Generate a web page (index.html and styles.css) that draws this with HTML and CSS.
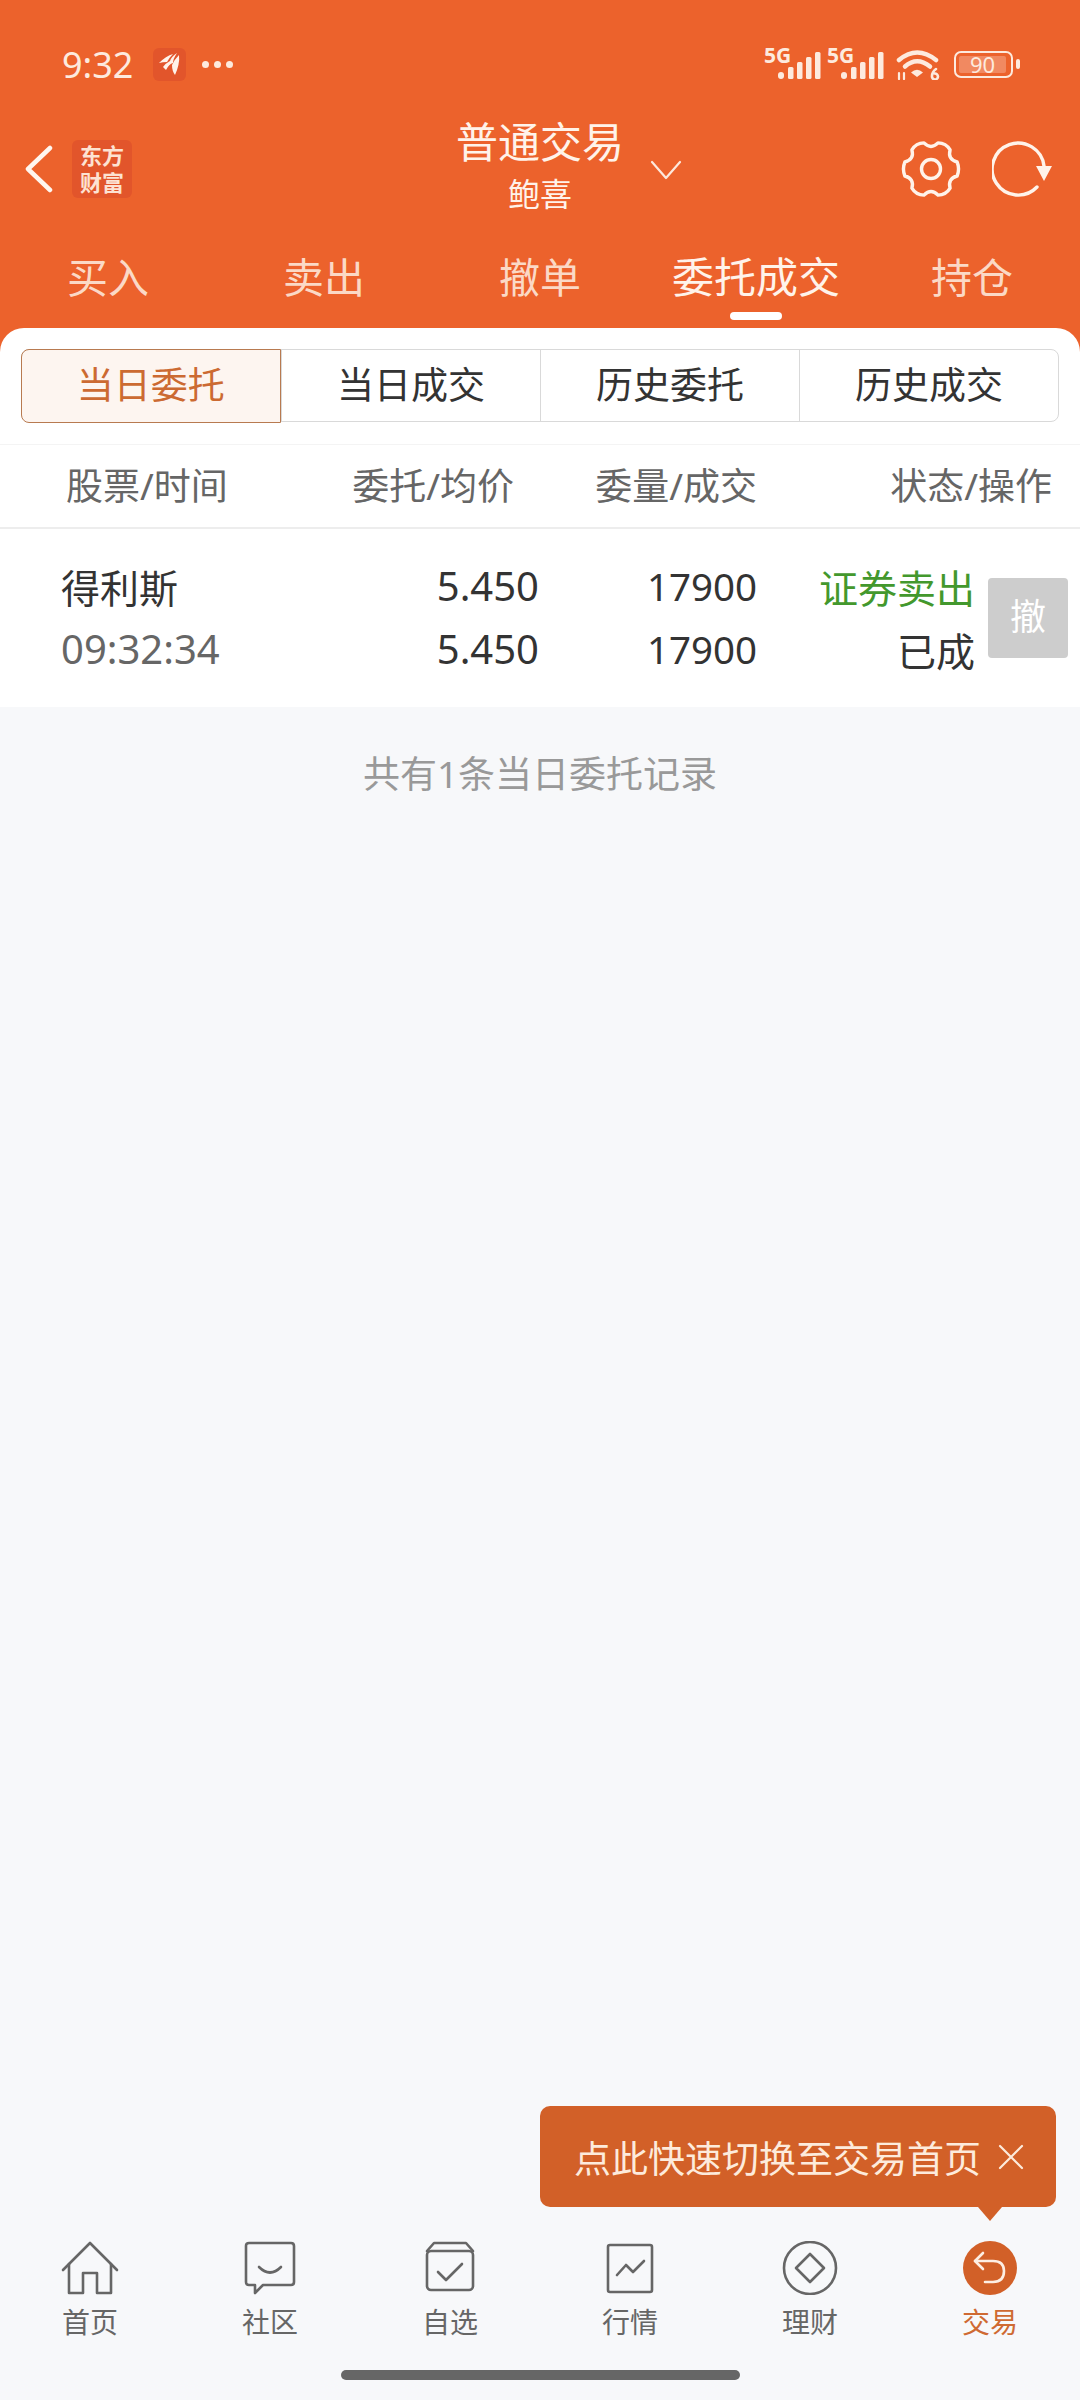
FILE: index.html
```html
<!DOCTYPE html>
<html lang="zh">
<head>
    <meta charset="UTF-8">
    <meta name="viewport" content="width=device-width, initial-scale=1.0">
    <title>普通交易</title>
    <link rel="stylesheet" href="styles.css">
</head>
<body>
    <div class="page">
        <header class="top">
            <div class="status-bar">
                <div class="status-left">
                    <span class="clock">9:32</span>
                    <span class="app-badge">
                        <svg width="24" height="24" viewBox="0 0 24 24" fill="#fff3ea"><path d="M1 11 Q8 4 15 2 Q11 6 9 10 Q5 10 1 11Z"/><path d="M5 15 Q8 11 12 9 Q13 5 19 1 Q15 7 15 11 Q11 12 8 18Z"/><path d="M14 13 Q16 8 21 3 Q22 12 17 23 Q14 19 14 13Z"/></svg>
                    </span>
                    <span class="dots"><i></i><i></i><i></i></span>
                </div>
                <div class="status-right">
                    <span class="signal">
                        <span class="net">5G</span>
                        <svg width="43" height="27" viewBox="0 0 43 27" fill="#fdeade"><rect x="0" y="20" width="6" height="7" rx="3"/><rect x="10" y="15" width="5.500" height="12" rx="1.500"/><rect x="19" y="10" width="5.500" height="17" rx="1.500"/><rect x="28" y="5" width="5.500" height="22" rx="1.500"/><rect x="37" y="0" width="5.500" height="27" rx="1.500"/></svg>
                    </span>
                    <span class="signal">
                        <span class="net">5G</span>
                        <svg width="43" height="27" viewBox="0 0 43 27" fill="#fdeade"><rect x="0" y="20" width="6" height="7" rx="3"/><rect x="10" y="15" width="5.500" height="12" rx="1.500"/><rect x="19" y="10" width="5.500" height="17" rx="1.500"/><rect x="28" y="5" width="5.500" height="22" rx="1.500"/><rect x="37" y="0" width="5.500" height="27" rx="1.500"/></svg>
                    </span>
                    <svg class="wifi" width="44" height="32" viewBox="0 0 44 32" fill="none" stroke="#fdeade" stroke-width="4.500" stroke-linecap="round"><path d="M3 12 Q21 -3 40 12"/><path d="M9 18.500 Q21 8 34 18.500"/><path d="M21 29 L15 24.500 Q21 19 27 24.500Z" fill="#fdeade" stroke="none"/><path d="M3 25 V31 M8 25 V31" stroke-width="2.200"/><path d="M40 21 Q36 24 36 28 A3 3 0 1 0 38.500 25.500" stroke-width="2.600"/></svg>
                    <span class="battery"><span class="battery-fill">90</span></span>
                    <span class="battery-nub"></span>
                </div>
            </div>
            <div class="title-bar">
                <div class="title-left">
                    <svg width="30" height="48" viewBox="0 0 30 48" fill="none" stroke="#fff6ef" stroke-width="4.500" stroke-linecap="round" stroke-linejoin="round"><path d="M26 3 L4 24 L26 45"/></svg>
                    <div class="brand">
                        <div>东方</div>
                        <div>财富</div>
                    </div>
                </div>
                <div class="title-center">
                    <div class="title-main">普通交易</div>
                    <div class="title-sub">鲍喜</div>
                </div>
                <div class="title-right">
                    <svg class="title-arrow" width="32" height="20" viewBox="0 0 32 20" fill="none" stroke="#fde8dc" stroke-width="2.200" stroke-linecap="round" stroke-linejoin="round"><path d="M2 2 L16 18 L30 2"/></svg>
                    <div class="title-actions">
                        <svg width="62" height="62" viewBox="-31 -31 62 62" fill="none" stroke="#fff3ea" stroke-width="3.400" stroke-linejoin="round"><path d="M26.100 -7 Q29 0 26.100 7 Q16.500 9.500 19.100 19.100 Q15 26 7 26.100 Q0 19 -7 26.100 Q-15 26 -19.100 19.100 Q-16.500 9.500 -26.100 7 Q-29 0 -26.100 -7 Q-16.500 -9.500 -19.100 -19.100 Q-15 -26 -7 -26.100 Q0 -19 7 -26.100 Q15 -26 19.100 -19.100 Q16.500 -9.500 26.100 -7Z"/><circle cx="0" cy="0" r="9.500"/></svg>
                        <svg width="64" height="58" viewBox="0 0 64 58" fill="none" stroke="#fff3ea" stroke-width="3.400" stroke-linecap="round"><path d="M45 47 A26 26 0 1 1 52 26"/><path d="M44 26 H60 L52 41Z" fill="#fff3ea" stroke="none"/></svg>
                    </div>
                </div>
            </div>
            <nav class="main-tabs">
                <div class="main-tab">买入</div>
                <div class="main-tab">卖出</div>
                <div class="main-tab">撤单</div>
                <div class="main-tab active">委托成交</div>
                <div class="main-tab">持仓</div>
            </nav>
        </header>

        <main class="content">
            <section class="sheet">
                <div class="segments">
                    <div class="segment active">当日委托</div>
                    <div class="segment">当日成交</div>
                    <div class="segment">历史委托</div>
                    <div class="segment">历史成交</div>
                </div>
                <div class="table-head">
                    <div>股票/时间</div>
                    <div class="num">委托/均价</div>
                    <div class="num">委量/成交</div>
                    <div class="num">状态/操作</div>
                </div>
                <div class="order-row">
                    <div class="stock-name">得利斯</div>
                    <div class="num digits">5.450</div>
                    <div class="num qty">17900</div>
                    <div class="num sell">证券卖出</div>
                    <div class="cancel-btn">撤</div>
                    <div class="order-time digits">09:32:34</div>
                    <div class="num digits">5.450</div>
                    <div class="num qty">17900</div>
                    <div class="num">已成</div>
                </div>
            </section>
            <p class="record-count">共有1条当日委托记录</p>
        </main>

        <div class="tip">
            <span>点此快速切换至交易首页</span>
            <svg width="26" height="26" viewBox="0 0 26 26" fill="none" stroke="#fdebdc" stroke-width="2.200" stroke-linecap="round"><path d="M2 2 L24 24 M24 2 L2 24"/></svg>
        </div>

        <footer class="bottom">
            <nav class="bottom-nav">
                <div class="nav-item">
                    <svg width="58" height="54" viewBox="0 0 58 54" fill="none" stroke="#666" stroke-width="2.600" stroke-linejoin="round" stroke-linecap="round"><path d="M2 29 L29 2 L56 29"/><path d="M8 23 V52 H22 V32 H36 V52 H50 V23"/></svg>
                    <span>首页</span>
                </div>
                <div class="nav-item">
                    <svg width="52" height="54" viewBox="0 0 52 54" fill="none" stroke="#666" stroke-width="2.600" stroke-linejoin="round" stroke-linecap="round"><path d="M5 2 H47 Q50 2 50 5 V41 Q50 44 47 44 H19 L11 52 V44 H5 Q2 44 2 41 V5 Q2 2 5 2Z"/><path d="M15 26 Q26 37 37 26"/></svg>
                    <span>社区</span>
                </div>
                <div class="nav-item">
                    <svg width="50" height="54" viewBox="0 0 50 54" fill="none" stroke="#666" stroke-width="2.600" stroke-linejoin="round" stroke-linecap="round"><path d="M2 10 L9 2 H41 L48 10"/><rect x="2" y="10" width="46" height="39" rx="4"/><path d="M13 31 L21 39 L37 23"/></svg>
                    <span>自选</span>
                </div>
                <div class="nav-item">
                    <svg width="48" height="54" viewBox="0 0 48 54" fill="none" stroke="#666" stroke-width="2.600" stroke-linejoin="round" stroke-linecap="round"><rect x="2" y="4" width="44" height="47" rx="2"/><path d="M11 34 L20 24 L27 31 L38 20"/></svg>
                    <span>行情</span>
                </div>
                <div class="nav-item">
                    <svg width="56" height="54" viewBox="0 1 56 54" fill="none" stroke="#666" stroke-width="2.600" stroke-linejoin="round"><circle cx="28" cy="28" r="26"/><path d="M28 14 L42 28 L28 42 L14 28Z"/></svg>
                    <span>理财</span>
                </div>
                <div class="nav-item active">
                    <svg width="56" height="54" viewBox="0 1 56 54" fill="none" stroke="#fdeee3" stroke-width="2.600" stroke-linejoin="round" stroke-linecap="round"><circle cx="28" cy="28" r="27" fill="#d26028" stroke="none"/><path d="M21 13 L13 21 L21 29"/><path d="M13 21 H31 Q42 21 42 31 Q42 42 31 42 H23"/></svg>
                    <span>交易</span>
                </div>
            </nav>
            <div class="home-bar"></div>
        </footer>
    </div>
</body>
</html>
```

FILE: styles.css
```css
* {
    box-sizing: border-box;
}

body {
    margin: 0;
    font-family: 'Noto Sans', 'Noto Sans CJK SC', sans-serif;
    background: #f7f8fa;
    color: #333;
}

.page {
    position: relative;
    width: 1080px;
    height: 2400px;
    display: flex;
    flex-direction: column;
    overflow: hidden;
}

/* 顶部橙色区域 */
.top {
    background: #ec622c;
    padding-bottom: 24px;
}

.status-bar {
    height: 100px;
    padding: 28px 60px 0 62px;
    display: flex;
    justify-content: space-between;
    align-items: center;
}

.status-left,
.status-right {
    display: flex;
    align-items: center;
}

.clock {
    font-size: 36px;
    color: #fdeade;
    width: 91px;
}

.app-badge {
    width: 33px;
    height: 33px;
    border-radius: 6px;
    background: #e2552b;
    display: flex;
    align-items: center;
    justify-content: center;
}

.dots {
    display: flex;
    gap: 5px;
    margin-left: 16px;
}

.dots i {
    width: 7px;
    height: 7px;
    border-radius: 50%;
    background: #fdeade;
}

.status-right {
    gap: 6px;
}

.signal {
    display: flex;
    align-items: flex-end;
    width: 57px;
    height: 30px;
    position: relative;
    justify-content: flex-end;
}

.net {
    position: absolute;
    left: 0;
    top: -5px;
    font-size: 21px;
    line-height: 22px;
    font-weight: 700;
    color: #fdeade;
}

.wifi {
    margin-left: 6px;
}

.battery {
    width: 59px;
    height: 27px;
    margin-left: 8px;
    border: 2.500px solid #fdeade;
    border-radius: 7px;
    padding: 3px;
    display: flex;
}

.battery-fill {
    width: 47px;
    background: rgba(255, 255, 255, 0.25);
    border-radius: 2px;
    font-size: 22px;
    line-height: 16px;
    text-align: center;
    color: #fdeade;
}

.battery-nub {
    width: 4px;
    height: 10px;
    margin-left: -3px;
    border-radius: 2px;
    background: #fdeade;
}

.title-bar {
    height: 132px;
    padding: 0 24px;
    display: grid;
    grid-template-columns: 1fr auto 1fr;
    align-items: center;
}

.title-left {
    display: flex;
    align-items: center;
    gap: 18px;
    margin-top: 5px;
}

.brand {
    width: 60px;
    height: 58px;
    background: #e2552b;
    border-radius: 6px;
    font-size: 22px;
    line-height: 27px;
    font-weight: 700;
    color: #fde2d2;
    text-align: center;
    padding-top: 2px;
}

.title-center {
    text-align: center;
    color: #fff3ea;
}

.title-main {
    font-size: 42px;
    line-height: 52px;
}

.title-sub {
    font-size: 32px;
    line-height: 44px;
    margin-top: 4px;
}

.title-right {
    display: flex;
    align-items: center;
    justify-content: space-between;
    padding-left: 26px;
}

.title-arrow {
    margin-top: 8px;
}

.title-actions {
    display: flex;
    align-items: center;
    gap: 30px;
    margin-top: 5px;
}

.main-tabs {
    display: flex;
    height: 96px;
}

.main-tab {
    flex: 1;
    position: relative;
    text-align: center;
    font-size: 41px;
    line-height: 90px;
    color: #fbd9c6;
}

.main-tab.active {
    font-size: 42px;
    color: #fff3ea;
}

.main-tab.active::after {
    content: "";
    position: absolute;
    left: 82px;
    bottom: 8px;
    width: 52px;
    height: 8px;
    border-radius: 4px;
    background: #fff;
}

/* 内容区域 */
.content {
    flex: 1;
    margin-top: -24px;
}

.sheet {
    background: #fff;
    border-radius: 24px 24px 0 0;
    padding-top: 21px;
}

.segments {
    display: grid;
    grid-template-columns: repeat(4, 1fr);
    height: 73px;
    margin: 0 21px 22px;
    border: 1.500px solid #d9d9d9;
    border-radius: 8px;
}

.segment {
    text-align: center;
    font-size: 37px;
    line-height: 70px;
    border-left: 1.500px solid #d9d9d9;
}

.segment:first-child {
    border-left: none;
}

.segment.active {
    margin: -1.500px 0 -1.500px -1.500px;
    border: 1.500px solid #b87a50;
    border-radius: 8px 0 0 8px;
    background: #fdf5f0;
    color: #cc6a32;
}

.table-head {
    height: 85px;
    padding: 0 28px 4px 66px;
    display: grid;
    grid-template-columns: 268px 180px 243px 295px;
    align-items: center;
    font-size: 37px;
    color: #666;
    border-top: 1px solid #f4f4f4;
    border-bottom: 2px solid #ededed;
}

.num {
    text-align: right;
}

.order-row {
    padding: 25px 0 27px 61px;
    display: grid;
    grid-template-columns: 228px 250px 218px 218px 93px;
    grid-auto-rows: 63px;
    align-items: center;
    font-size: 39px;
}

.digits {
    font-size: 40px;
}

.qty {
    font-size: 38.500px;
}

.order-time {
    color: #666;
}

.sell {
    color: #43982d;
}

.cancel-btn {
    grid-column: 5;
    grid-row: 1 / span 2;
    justify-self: end;
    margin-top: 2px;
    width: 80px;
    height: 80px;
    border-radius: 4px;
    background: #cdcdcd;
    color: #fff;
    font-size: 36px;
    line-height: 78px;
    text-align: center;
}

.record-count {
    margin: 45px 0 0;
    text-align: center;
    font-size: 37px;
    line-height: 44px;
    color: #999;
}

/* 悬浮提示 */
.tip {
    position: absolute;
    right: 24px;
    bottom: 193px;
    width: 516px;
    height: 101px;
    padding: 0 32px 0 34px;
    border-radius: 10px;
    background: #d26028;
    color: #fdebdc;
    font-size: 37px;
    display: flex;
    align-items: center;
    justify-content: space-between;
}

.tip::after {
    content: "";
    position: absolute;
    right: 54px;
    bottom: -14px;
    border-left: 12px solid transparent;
    border-right: 12px solid transparent;
    border-top: 14px solid #d26028;
}

/* 底部导航 */
.bottom-nav {
    display: flex;
    padding-top: 3px;
}

.nav-item {
    flex: 1;
    height: 102px;
    display: flex;
    flex-direction: column;
    align-items: center;
    font-size: 28px;
    line-height: 38px;
    color: #666;
}

.nav-item svg {
    margin-bottom: 8px;
}

.nav-item.active {
    color: #cf6a32;
}

.home-bar {
    width: 399px;
    height: 10px;
    margin: 27px auto 20px;
    border-radius: 5px;
    background: #666;
}
```
